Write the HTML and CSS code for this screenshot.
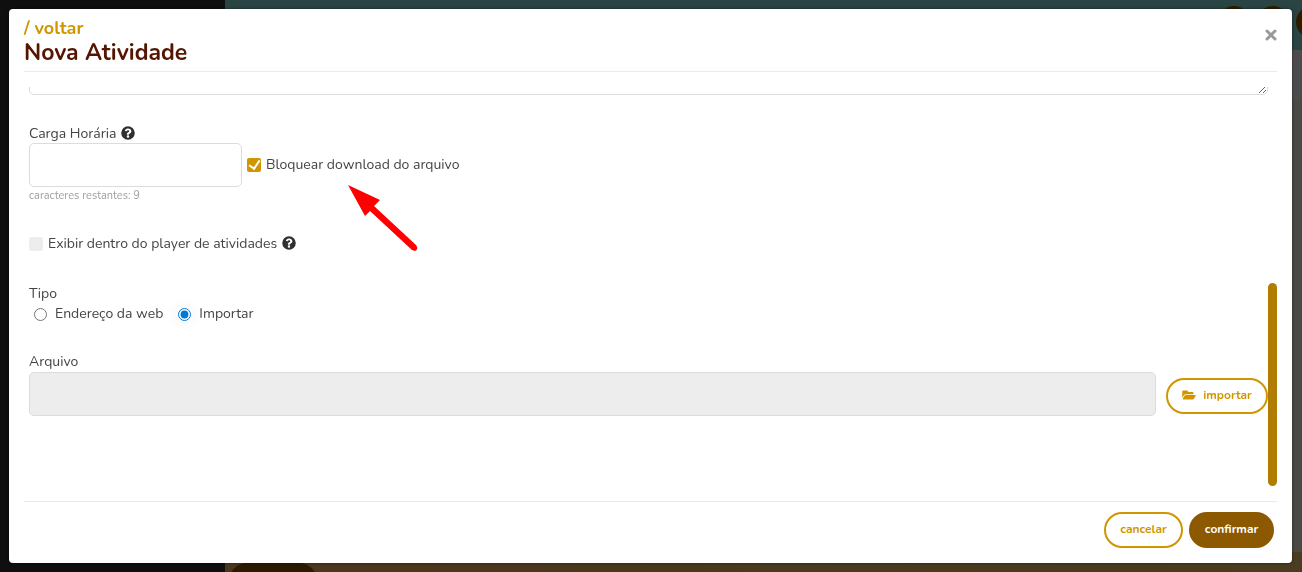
FILE: index.html
```html
<!DOCTYPE html>
<html lang="pt-BR">
<head>
<meta charset="utf-8">
<meta name="viewport" content="width=device-width, initial-scale=1">
<title>Nova Atividade</title>
<link rel="stylesheet" href="styles.css">
</head>
<body>
<svg class="sprite" aria-hidden="true">
  <symbol id="help" viewBox="0 0 512 512"><path fill-rule="evenodd" d="M504 256A248 248 0 1 1 8 256a248 248 0 0 1 496 0zM262 90c-54 0-89 23-116 64-4 5-3 12 3 16l34 26c6 4 13 3 17-2 18-23 30-36 57-36 20 0 45 13 45 33 0 15-12 22-33 34-24 13-55 30-55 72v7c0 6 5 12 12 12h56c7 0 12-6 12-12v-1c0-29 86-30 86-109 0-60-62-104-118-104zm-6 248a46 46 0 1 0 0 92 46 46 0 0 0 0-92z"/></symbol>
</svg>

<div class="page" aria-hidden="true">
  <div class="page-side"></div>
  <div class="page-main">
    <div class="page-top"><span class="dot"></span><span class="dot"></span><span class="dot"></span></div>
    <div class="page-body"></div>
    <div class="page-foot"><span class="pill"></span></div>
  </div>
</div>

<main class="modal" role="dialog" aria-labelledby="title">
  <header class="modal-head">
    <div>
      <a class="back" href="#">/ voltar</a>
      <h1 class="title" id="title">Nova Atividade</h1>
    </div>
    <button class="close" type="button" aria-label="Fechar">
      <svg viewBox="0 0 12 12" width="12" height="12"><path d="M2 2l8 8M10 2l-8 8" stroke="currentColor" stroke-width="3" stroke-linecap="round"/></svg>
    </button>
  </header>

  <form class="scroller">
    <textarea class="description" aria-label="Descrição"></textarea>

    <div class="row workload">
      <div class="field">
        <div class="label-line">
          <label for="hours">Carga Horária</label>
          <svg class="help"><use href="#help"/></svg>
        </div>
        <input class="text-input" id="hours" type="text">
        <small class="hint">caracteres restantes: 9</small>
      </div>
      <label class="check"><input type="checkbox" checked>Bloquear download do arquivo</label>
    </div>

    <div class="row player">
      <label class="check"><input type="checkbox">Exibir dentro do player de atividades</label>
      <svg class="help"><use href="#help"/></svg>
    </div>

    <fieldset class="types">
      <legend>Tipo</legend>
      <div class="row radios">
        <label class="radio"><input type="radio" name="type">Endereço da web</label>
        <label class="radio"><input type="radio" name="type" checked>Importar</label>
      </div>
    </fieldset>

    <div class="file">
      <label for="file">Arquivo</label>
      <div class="row file-row">
        <input class="text-input" id="file" type="text" disabled>
        <button class="btn import" type="button">
          <svg viewBox="0 0 576 512" width="14" height="12" fill="currentColor"><path d="M573 293l-73 125c-9 14-29 30-52 30H44c-18 0-29-20-20-36l73-124c10-17 29-32 52-32h403c19 0 30 20 21 37zM149 224h331v-48c0-27-21-48-48-48H272l-64-64H48c-27 0-48 21-48 48v278l69-119c17-29 48-47 80-47z"/></svg>
          importar
        </button>
      </div>
    </div>
    <div class="thumb"></div>
  </form>

  <footer class="modal-foot">
    <button class="btn" type="button">cancelar</button>
    <button class="btn primary" type="button">confirmar</button>
  </footer>

  <svg class="arrow" viewBox="0 0 72 68" aria-hidden="true"><path d="M1 1L33 16 27 22 69 61Q72 65 68 67L65 66 23 27 18 32z"/></svg>
</main>
</body>
</html>
```
FILE: styles.css
```css
* { box-sizing: border-box; }

body {
  margin: 0;
  height: 100vh;
  overflow: hidden;
  font: 14px/20px Nunito, Lato, "Open Sans", sans-serif;
  color: #444;
}

button, input, textarea { font: inherit; }
.sprite { display: none; }

/* dimmed page under the dialog */
.page { display: flex; height: 100vh; background: #4a4944; }
.page-side { width: 225px; background: #0f0f0f; }
.page-main { flex: 1; display: flex; flex-direction: column; }
.page-top { height: 50px; background: #2a4343; display: flex; justify-content: flex-end; padding-top: 6px; gap: 8px; overflow: hidden; }
.dot { width: 32px; height: 32px; border-radius: 50%; background: #2f1c00; flex: none; margin-right: -1px; }
.dot:last-child { margin-right: -26px; }
.page-body { flex: 1; border-top: 50px solid #4c4c4c; }
.page-foot { height: 20px; background: linear-gradient(90deg, #4a361c, #4a3c20); padding: 11px 4px 0; overflow: hidden; }
.pill { display: block; width: 88px; height: 36px; border-radius: 18px; background: #2b1a00; }

.modal {
  position: fixed;
  inset: 9px 10px 9px 9px;
  display: flex;
  flex-direction: column;
  padding: 0 15px;
  background: #fff;
  border-radius: 4px;
  box-shadow: 0 0 3px rgba(0, 0, 0, .5);
}

.modal-head { display: flex; justify-content: space-between; height: 63px; padding-top: 8px; border-bottom: 1px solid #ebebeb; }
.back { display: block; font-size: 18px; line-height: 22px; font-weight: 700; color: #d09600; text-decoration: none; }
.title { margin: 0; font-size: 23px; line-height: 28px; font-weight: 700; color: #551500; }
.close { align-self: flex-start; width: 12px; height: 36px; padding: 0; border: 0; background: none; color: #999; }
.close svg { display: block; margin: auto; }

.scroller { position: relative; flex: 1; min-height: 0; overflow: hidden; margin: 15px 0; padding-left: 5px; }
.thumb { position: absolute; right: 0; bottom: 0; width: 9px; height: 51%; border-radius: 5px; background: #b17d00; }

.row { display: flex; align-items: center; }
.description { display: block; width: calc(100% - 9px); height: 60px; margin-top: -52px; border: 1px solid #dcdcdc; border-radius: 5px; background: #fff; }

.workload { margin-top: 29px; gap: 5px; }
.field { display: flex; flex-direction: column; width: 213px; }
.label-line { display: flex; align-items: center; gap: 5px; height: 19px; }
.help { width: 14px; height: 14px; margin-bottom: 2px; fill: #303030; }
.text-input { width: 100%; height: 44px; padding: 0 12px; border: 1px solid #dcdcdc; border-radius: 5px; background: #fff; }
.text-input:disabled { background: #ededed; }
.hint { font-size: 11px; line-height: 18px; color: #a0a0a0; }

.check { display: flex; align-items: center; gap: 5px; }
.check input { appearance: none; width: 14px; height: 14px; margin: 0; border-radius: 2px; background: #ededed; }
.check input:checked { background: #d09600; display: grid; place-items: center; }
.check input:checked::before { content: ""; width: 5px; height: 9px; margin-bottom: 2px; border: solid #fff; border-width: 0 2px 2px 0; transform: rotate(34deg); }

.player { margin-top: 29px; gap: 5px; }

.types { margin: 30px 0 0; padding: 0; border: 0; }
.types legend { padding: 0; }
.radios { gap: 15px; padding-left: 5px; }
.radio { display: flex; align-items: center; gap: 8px; }
.radio input { width: 13px; height: 13px; margin: 0; accent-color: #0078d7; }
.radio input:checked { border-radius: 50%; box-shadow: 0 0 14px rgba(0, 0, 0, .08); }

.file { margin-top: 28px; padding-right: 9px; }
.file label { display: block; }
.file-row { gap: 10px; align-items: flex-start; }
.file-row .text-input { flex: 1; }

.btn { display: flex; align-items: center; justify-content: center; min-width: 79px; height: 36px; padding: 0 10px 2px; border: 2px solid #d09600; border-radius: 18px; background: #fff; color: #d09600; font-size: 12px; font-weight: 700; }
.import { min-width: 102px; margin-top: 6px; gap: 7px; }
.primary { min-width: 85px; border-color: #8c5900; background: #8c5900; color: #fff; }

.modal-foot { display: flex; justify-content: flex-end; gap: 6px; height: 62px; padding: 10px 3px 0; border-top: 1px solid #ebebeb; }

/* pointer drawn over the form */
.arrow { position: absolute; left: 338px; top: 175px; width: 72px; height: 68px; fill: #f00; pointer-events: none; }
```
